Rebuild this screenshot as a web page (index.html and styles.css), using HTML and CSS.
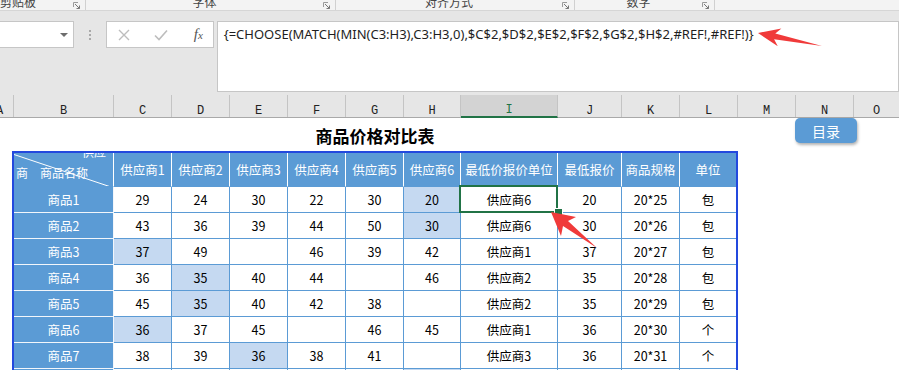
FILE: index.html
```html
<!DOCTYPE html>
<html lang="zh-CN">
<head>
<meta charset="utf-8">
<title>商品价格对比表</title>
<link rel="stylesheet" href="styles.css">
</head>
<body>
<div class="ribbon">
  <div class="grp g1"><span class="lbl">剪贴板</span><svg class="launch" width="7" height="7" viewBox="0 0 7 7"><path d="M0.5 5V0.5H5" fill="none" stroke="#9a9a9a"/><path d="M2 2l4.5 4.5M6.5 3.5v3h-3" fill="none" stroke="#777"/></svg></div>
  <div class="grp g2"><span class="lbl">字体</span><svg class="launch" width="7" height="7" viewBox="0 0 7 7"><path d="M0.5 5V0.5H5" fill="none" stroke="#9a9a9a"/><path d="M2 2l4.5 4.5M6.5 3.5v3h-3" fill="none" stroke="#777"/></svg></div>
  <div class="grp g3"><span class="lbl">对齐方式</span><svg class="launch" width="7" height="7" viewBox="0 0 7 7"><path d="M0.5 5V0.5H5" fill="none" stroke="#9a9a9a"/><path d="M2 2l4.5 4.5M6.5 3.5v3h-3" fill="none" stroke="#777"/></svg></div>
  <div class="grp g4"><span class="lbl">数字</span><svg class="launch" width="7" height="7" viewBox="0 0 7 7"><path d="M0.5 5V0.5H5" fill="none" stroke="#9a9a9a"/><path d="M2 2l4.5 4.5M6.5 3.5v3h-3" fill="none" stroke="#777"/></svg></div>
</div>

<div class="fbar">
  <div class="namebox"><span class="caret"></span></div>
  <div class="grip"><i></i><i></i><i></i></div>
  <div class="fxbox">
    <svg class="ic" width="14" height="14" viewBox="0 0 14 14"><path d="M2 2l10 10M12 2L2 12" stroke="#bdbdbd" stroke-width="1.4" fill="none"/></svg>
    <svg class="ic" width="16" height="14" viewBox="0 0 16 14"><path d="M2 7.5l4 4 8-9" stroke="#bdbdbd" stroke-width="1.6" fill="none"/></svg>
    <span class="fx"><i>f</i><i class="x">x</i></span>
  </div>
  <div class="formula">{=CHOOSE(MATCH(MIN(C3:H3),C3:H3,0),$C$2,$D$2,$E$2,$F$2,$G$2,$H$2,#REF!,#REF!)}</div>
</div>

<div class="colhdr">
  <div class="ch wA"><span class="a">A</span></div>
  <div class="ch wB">B</div>
  <div class="ch w58">C</div>
  <div class="ch w58">D</div>
  <div class="ch w58">E</div>
  <div class="ch w58">F</div>
  <div class="ch w58">G</div>
  <div class="ch w57">H</div>
  <div class="ch wI active">I</div>
  <div class="ch wJ">J</div>
  <div class="ch w58">K</div>
  <div class="ch w58">L</div>
  <div class="ch w58">M</div>
  <div class="ch w58">N</div>
  <div class="ch wO">O</div>
</div>

<div class="sheet">
  <div class="title">商品价格对比表</div>
  <div class="grid">
    <div class="c hd diag">
      <svg class="diagline" width="100" height="34" viewBox="0 0 100 34"><path d="M0 1.5L97 34" stroke="#fff" stroke-width="1" fill="none"/></svg>
      <span class="dtop">供应</span>
      <span class="dbot"><span>商</span><span>商品名称</span></span>
    </div>
    <div class="c hd">供应商1</div>
    <div class="c hd">供应商2</div>
    <div class="c hd">供应商3</div>
    <div class="c hd">供应商4</div>
    <div class="c hd">供应商5</div>
    <div class="c hd">供应商6</div>
    <div class="c hd">最低价报价单位</div>
    <div class="c hd">最低报价</div>
    <div class="c hd">商品规格</div>
    <div class="c hd last">单位</div>

    <div class="c rh">商品1</div>
    <div class="c">29</div><div class="c">24</div><div class="c">30</div><div class="c">22</div><div class="c">30</div><div class="c hl">20</div>
    <div class="c sel">供应商6</div><div class="c">20</div><div class="c">20*25</div><div class="c last">包</div>

    <div class="c rh">商品2</div>
    <div class="c">43</div><div class="c">36</div><div class="c">39</div><div class="c">44</div><div class="c">50</div><div class="c hl">30</div>
    <div class="c">供应商6</div><div class="c">30</div><div class="c">20*26</div><div class="c last">包</div>

    <div class="c rh">商品3</div>
    <div class="c hl">37</div><div class="c">49</div><div class="c"></div><div class="c">46</div><div class="c">39</div><div class="c">42</div>
    <div class="c">供应商1</div><div class="c">37</div><div class="c">20*27</div><div class="c last">包</div>

    <div class="c rh">商品4</div>
    <div class="c">36</div><div class="c hl">35</div><div class="c">40</div><div class="c">44</div><div class="c"></div><div class="c">46</div>
    <div class="c">供应商2</div><div class="c">35</div><div class="c">20*28</div><div class="c last">包</div>

    <div class="c rh">商品5</div>
    <div class="c">45</div><div class="c hl">35</div><div class="c">40</div><div class="c">42</div><div class="c">38</div><div class="c"></div>
    <div class="c">供应商2</div><div class="c">35</div><div class="c">20*29</div><div class="c last">包</div>

    <div class="c rh">商品6</div>
    <div class="c hl">36</div><div class="c">37</div><div class="c">45</div><div class="c"></div><div class="c">46</div><div class="c">45</div>
    <div class="c">供应商1</div><div class="c">36</div><div class="c">20*30</div><div class="c last">个</div>

    <div class="c rh">商品7</div>
    <div class="c">38</div><div class="c">39</div><div class="c hl">36</div><div class="c">38</div><div class="c">41</div><div class="c"></div>
    <div class="c">供应商3</div><div class="c">36</div><div class="c">20*31</div><div class="c last">个</div>

    <div class="c rh">商品8</div>
    <div class="c">40</div><div class="c">41</div><div class="c">42</div><div class="c">43</div><div class="c">44</div><div class="c hl">33</div>
    <div class="c">供应商6</div><div class="c">33</div><div class="c">20*32</div><div class="c last">个</div>
  </div>
</div>

<div class="toc">目录</div>

<svg class="arrows" width="899" height="370" viewBox="0 0 899 370">
  <polygon fill="#f03a3a" points="758,33 781.4,28.6 775.3,33.5 822,46 774.1,39.3 777.8,46.2"/>
  <polygon fill="#f03a3a" points="551,212 576,217 568,221 597,248 563,226 561,236"/>
</svg>
</body>
</html>
```

FILE: styles.css
```css
* { box-sizing: border-box; margin: 0; padding: 0; }
html, body { width: 899px; height: 370px; overflow: hidden; }
body {
  background: #ffffff;
  font-family: "Noto Sans CJK SC", "Noto Sans", sans-serif;
  color: #000;
  position: relative;
}

/* ribbon strip (cut off at top) */
.ribbon {
  height: 11px;
  background: #f3f3f3;
  border-bottom: 1px solid #d6d6d6;
  display: flex;
  overflow: hidden;
}
.grp {
  height: 10px;
  display: flex;
  align-items: flex-end;
  border-right: 1px solid #d0d0d0;
  color: #444;
  font-size: 12px;
}
.grp .lbl { flex: 1; text-align: center; line-height: 16px; white-space: nowrap; }
.g1 .lbl { text-align: left; }
.grp .launch { align-self: flex-start; margin-top: 2px; margin-right: 5px; }
.g1 { width: 86px; }
.g2 { width: 250px; }
.g3 { width: 239px; }
.g4 { width: 140px; }

/* formula bar */
.fbar {
  height: 84px;
  background: #e6e6e6;
  display: flex;
  align-items: flex-start;
  padding-top: 10px;
}
.namebox {
  width: 76px;
  height: 27px;
  margin-left: -1px;
  background: #fff;
  border: 1px solid #c6c6c6;
  display: flex;
  align-items: center;
  justify-content: flex-end;
  padding-right: 5px;
}
.caret {
  width: 0; height: 0;
  border-left: 4px solid transparent;
  border-right: 4px solid transparent;
  border-top: 4px solid #6d6d6d;
}
.grip {
  width: 32px;
  height: 27px;
  display: flex;
  flex-direction: column;
  align-items: center;
  justify-content: center;
  gap: 2px;
}
.grip i { display: block; width: 2px; height: 2px; background: #a9a9a9; }
.fxbox {
  width: 109px;
  height: 27px;
  background: #fff;
  border: 1px solid #c6c6c6;
  display: flex;
  align-items: center;
  padding-left: 10px;
  gap: 22px;
}
.fxbox .ic { flex: none; }
.fx {
  font-family: "Liberation Serif", "DejaVu Serif", serif;
  font-style: italic;
  color: #555;
  font-size: 15px;
  margin-left: 3px;
}
.fx i { font-style: italic; }
.fx .x { font-size: 11px; }
.formula {
  margin-left: 3px;
  width: 690px;
  height: 71px;
  background: #fff;
  border: 1px solid #c6c6c6;
  padding: 3px 6px;
  font-family: "Noto Sans", sans-serif;
  font-size: 13px;
  line-height: 18px;
  color: #1e1e1e;
  white-space: nowrap;
}

/* column headers */
.colhdr {
  height: 23px;
  background: #e6e6e6;
  border-bottom: 1px solid #a9a9a9;
  display: flex;
  font-family: "Liberation Mono", "DejaVu Sans Mono", monospace;
  font-size: 12px;
  color: #222;
}
.ch {
  flex: none;
  border-right: 1px solid #c4c4c4;
  display: flex;
  align-items: flex-end;
  justify-content: center;
  padding-bottom: 0;
  line-height: 12px;
}
.ch .a { margin-left: -4px; }
.wA { width: 14px; justify-content: flex-start; }
.wB { width: 100px; }
.w58 { width: 58px; }
.w57 { width: 57px; }
.wI { width: 97px; }
.wJ { width: 64px; }
.wO { flex: 1; border-right: none; }
.ch.active {
  background: #d3d3d3;
  color: #217346;
  border-bottom: 2px solid #217346;
  margin-bottom: -1px;
}

/* sheet */
.sheet {
  padding-left: 12px;
}
.title {
  width: 726px;
  height: 33px;
  display: flex;
  align-items: center;
  justify-content: center;
  font-size: 17px;
  font-weight: bold;
  padding-top: 1px;
}
.grid {
  display: grid;
  grid-template-columns: 100px 58px 58px 58px 58px 58px 57px 97px 64px 58px 56px;
  grid-template-rows: 34px;
  grid-auto-rows: 26px;
  width: 726px;
  border: 2px solid #2349de;
  border-bottom: none;
  font-size: 12.5px;
}
.c {
  border-right: 1px solid #5b9bd5;
  border-bottom: 1px solid #5b9bd5;
  display: flex;
  align-items: center;
  justify-content: center;
  background: #fff;
  white-space: nowrap;
  position: relative;
}
.c.last { border-right: none; }
.c.hd {
  background: #5b9bd5;
  color: #fff;
  border-right-color: #fff;
}
.c.rh {
  background: #5b9bd5;
  color: #fff;
  border-right-color: #f2f6fb;
  border-bottom-color: #f2f6fb;
}
.c.hl { background: #c5d9f1; }
.c.sel { z-index: 2; }
.c.sel::after {
  content: "";
  position: absolute;
  left: -2px; top: -2px; right: -1px; bottom: -1px;
  border: 2px solid #217346;
}
.c.sel::before {
  content: "";
  position: absolute;
  left: 93px; top: 21px;
  width: 7px; height: 7px;
  background: #217346;
  border: 1px solid #fff;
  z-index: 3;
}
.diag {
  overflow: hidden;
  display: block;
}
.diagline { position: absolute; left: 0; top: 0; }
.dtop {
  position: absolute;
  right: 7px;
  top: -7px;
  font-size: 12px;
  line-height: 12px;
}
.dbot {
  position: absolute;
  left: 2px;
  top: 11px;
  font-size: 12px;
  display: flex;
  gap: 12px;
}

/* floating button */
.toc {
  position: absolute;
  left: 795px;
  top: 118px;
  width: 62px;
  height: 25px;
  background: #5b9bd5;
  color: #fff;
  border-radius: 5px;
  box-shadow: 1px 2px 3px rgba(0,0,0,0.3);
  display: flex;
  align-items: center;
  justify-content: center;
  font-size: 14px;
}
.arrows {
  position: absolute;
  left: 0; top: 0;
  pointer-events: none;
  z-index: 10;
}
```
